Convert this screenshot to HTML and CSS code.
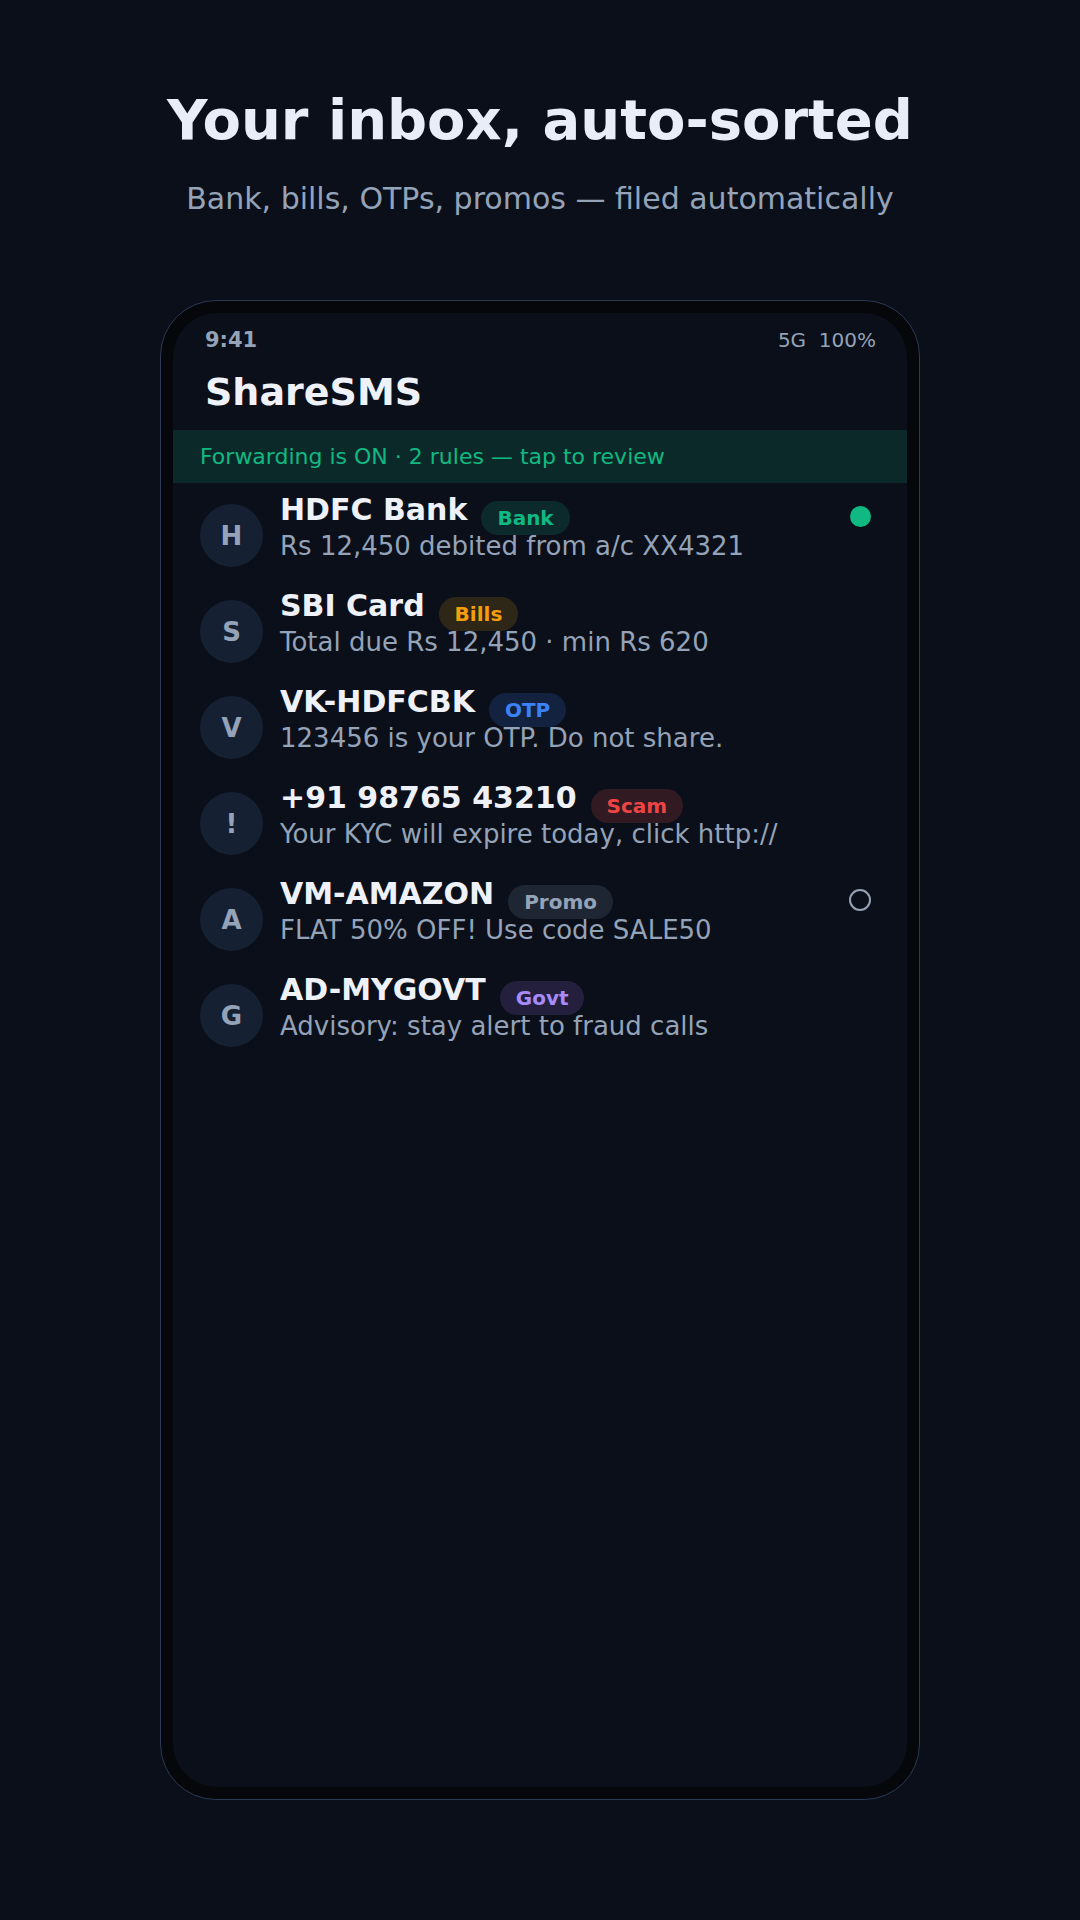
FILE: index.html
```html
<!DOCTYPE html>
<html lang="en">
<head>
    <meta charset="UTF-8">
    <meta name="viewport" content="width=device-width, initial-scale=1.0">
    <title>ShareSMS - Your inbox, auto-sorted</title>
    <link rel="stylesheet" href="styles.css">
</head>
<body>

    <div class="page">
        <h1 class="headline">Your inbox, auto-sorted</h1>
        <p class="subline">Bank, bills, OTPs, promos — filed automatically</p>

        <div class="phone">
            <div class="screen">
                <div class="status-bar">
                    <span class="clock">9:41</span>
                    <span class="signal">5G&nbsp;&nbsp;100%</span>
                </div>

                <div class="app-title">ShareSMS</div>

                <div class="forward-banner">Forwarding is ON · 2 rules — tap to review</div>

                <div class="msg-list">
                    <div class="msg">
                        <div class="avatar">H</div>
                        <div class="msg-body">
                            <div class="msg-title">
                                <span class="sender">HDFC Bank</span>
                                <span class="tag tag-bank">Bank</span>
                            </div>
                            <div class="preview">Rs 12,450 debited from a/c XX4321</div>
                        </div>
                        <div class="mark"><span class="dot"></span></div>
                    </div>

                    <div class="msg">
                        <div class="avatar">S</div>
                        <div class="msg-body">
                            <div class="msg-title">
                                <span class="sender">SBI Card</span>
                                <span class="tag tag-bills">Bills</span>
                            </div>
                            <div class="preview">Total due Rs 12,450 · min Rs 620</div>
                        </div>
                        <div class="mark"></div>
                    </div>

                    <div class="msg">
                        <div class="avatar">V</div>
                        <div class="msg-body">
                            <div class="msg-title">
                                <span class="sender">VK-HDFCBK</span>
                                <span class="tag tag-otp">OTP</span>
                            </div>
                            <div class="preview">123456 is your OTP. Do not share.</div>
                        </div>
                        <div class="mark"></div>
                    </div>

                    <div class="msg">
                        <div class="avatar">!</div>
                        <div class="msg-body">
                            <div class="msg-title">
                                <span class="sender">+91 98765 43210</span>
                                <span class="tag tag-scam">Scam</span>
                            </div>
                            <div class="preview">Your KYC will expire today, click http://</div>
                        </div>
                        <div class="mark"></div>
                    </div>

                    <div class="msg">
                        <div class="avatar">A</div>
                        <div class="msg-body">
                            <div class="msg-title">
                                <span class="sender">VM-AMAZON</span>
                                <span class="tag tag-promo">Promo</span>
                            </div>
                            <div class="preview">FLAT 50% OFF! Use code SALE50</div>
                        </div>
                        <div class="mark"><span class="ring"></span></div>
                    </div>

                    <div class="msg">
                        <div class="avatar">G</div>
                        <div class="msg-body">
                            <div class="msg-title">
                                <span class="sender">AD-MYGOVT</span>
                                <span class="tag tag-govt">Govt</span>
                            </div>
                            <div class="preview">Advisory: stay alert to fraud calls</div>
                        </div>
                        <div class="mark"></div>
                    </div>
                </div>
            </div>
        </div>
    </div>

</body>
</html>
```

FILE: styles.css
```css
body {
    margin: 0;
    background-color: #0b0f19;
    font-family: "DejaVu Sans", "Noto Sans", sans-serif;
    color: #e8edf6;
}

.page {
    padding-top: 86px;
    display: flex;
    flex-direction: column;
    align-items: center;
}

.headline {
    margin: 0;
    font-size: 56px;
    line-height: 68px;
    font-weight: bold;
    color: #e8edf7;
}

.subline {
    margin: 27px 0 0;
    font-size: 30px;
    line-height: 36px;
    color: #94a3b8;
}

/* phone mockup */
.phone {
    margin-top: 83px;
    width: 760px;
    height: 1500px;
    box-sizing: border-box;
    padding: 12px;
    border: 1px solid #2b3a55;
    border-radius: 56px;
    background-color: #05070b;
}

.screen {
    height: 100%;
    border-radius: 44px;
    background-color: #0b0f19;
    overflow: hidden;
}

.status-bar {
    display: flex;
    justify-content: space-between;
    align-items: baseline;
    padding: 15px 31px 0 32px;
    font-size: 20px;
    line-height: 24px;
    color: #94a3b8;
}

.clock {
    font-size: 21px;
    font-weight: bold;
}

.app-title {
    margin-top: 17px;
    padding: 0 32px;
    font-size: 38px;
    line-height: 46px;
    font-weight: bold;
    color: #eef2f8;
}

.forward-banner {
    margin-top: 15px;
    height: 53px;
    padding: 0 27px;
    font-size: 22px;
    line-height: 53px;
    color: #10b981;
    background-color: #0c292a;
}

/* message rows */
.msg-list {
    padding: 5px 36px 0 27px;
}

.msg {
    display: flex;
    align-items: flex-start;
    height: 96px;
}

.avatar {
    flex: none;
    width: 63px;
    height: 63px;
    margin-top: 16px;
    border-radius: 50%;
    background-color: #162033;
    color: #94a3b8;
    font-size: 26px;
    font-weight: bold;
    display: flex;
    align-items: center;
    justify-content: center;
}

.msg-body {
    flex: 1;
    margin-left: 17px;
    padding-top: 4px;
}

.msg-title {
    display: flex;
    align-items: flex-start;
    gap: 14px;
    height: 36px;
}

.sender {
    font-size: 30px;
    line-height: 36px;
    font-weight: bold;
    color: #eef2f8;
    white-space: nowrap;
}

.tag {
    margin-top: 9px;
    height: 34px;
    padding: 0 16px;
    border-radius: 17px;
    font-size: 20px;
    line-height: 34px;
    font-weight: bold;
}

.tag-bank { background-color: #0c2a2c; color: #10b981; }
.tag-bills { background-color: #2e2718; color: #f59e0b; }
.tag-otp { background-color: #13223f; color: #3b82f6; }
.tag-scam { background-color: #321a22; color: #ef4444; }
.tag-promo { background-color: #1e2633; color: #94a3b8; }
.tag-govt { background-color: #231f3d; color: #a78bfa; }

.preview {
    font-size: 26px;
    line-height: 36px;
    color: #94a3b8;
    white-space: nowrap;
}

.mark {
    flex: none;
    width: 22px;
    padding-top: 17px;
    display: flex;
    justify-content: center;
}

.dot {
    width: 21px;
    height: 21px;
    margin-top: 1px;
    border-radius: 50%;
    background-color: #10b981;
}

.ring {
    width: 22px;
    height: 22px;
    box-sizing: border-box;
    border: 2.5px solid #94a3b8;
    border-radius: 50%;
}
```
